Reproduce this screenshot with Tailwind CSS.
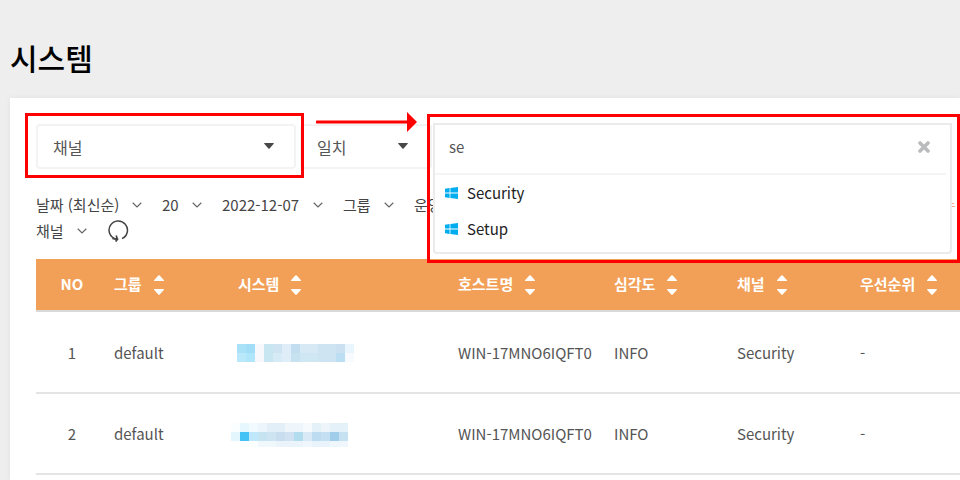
<!DOCTYPE html>
<html lang="ko">
<head>
<meta charset="utf-8">
<meta name="viewport" content="width=device-width, initial-scale=1">
<title>시스템</title>
<script src="https://cdn.jsdelivr.net/npm/@tailwindcss/browser@4"></script>
</head>
<body class="relative min-h-screen overflow-hidden bg-[#eeeeee] font-['Noto_Sans_CJK_KR',sans-serif] text-base text-[#444]">
<svg class="hidden">
  <symbol id="chev" viewBox="0 0 10 6"><path d="M.7.8 5 5 9.3.8" fill="none" stroke="#666" stroke-width="1.2"/></symbol>
  <symbol id="caret" viewBox="0 0 10 6"><path d="M.6 0h8.8q.8 0 .3.7L5.6 5.5q-.6.6-1.2 0L.3.7Q-.2 0 .6 0Z" fill="#484848"/></symbol>
  <symbol id="sort" viewBox="0 0 10 20"><path d="M0 5.2 4.3.6q.7-.7 1.4 0L10 5.2q.2.8-.6.8H.6Q-.2 6 0 5.2ZM0 14.8l4.3 4.6q.7.7 1.4 0L10 14.8q.2-.8-.6-.8H.6q-.8 0-.6.8Z" fill="#fff"/></symbol>
  <symbol id="win" viewBox="0 0 13 12"><path d="M0 1.8 4.6 1v4.6H0ZM5.4.9 13 0v5.6H5.4ZM0 6.4h4.6V11L0 10.2ZM5.4 6.4H13V12l-7.6-.9Z" fill="#00adef"/></symbol>
</svg>

<header class="flex h-[98px] items-center px-2.5 pt-[15px]">
  <h1 class="text-[30px] leading-[44px] font-medium text-black">시스템</h1>
</header>

<main class="ml-2.5 min-h-[382px] bg-white pt-[26px] pl-[26px] shadow-[0_0_5px_rgba(0,0,0,0.06)]">
  <div class="flex gap-1">
    <div class="relative w-[260px]">
      <select aria-label="검색 필드" class="h-[45px] w-full appearance-none rounded border-2 border-[#f3f3f3] bg-white px-[15px] text-base text-[#555]"><option>채널</option></select>
      <svg class="pointer-events-none absolute top-[19px] right-[22px] h-1.5 w-2.5"><use href="#caret"/></svg>
    </div>
    <div class="relative w-[132px]">
      <select aria-label="검색 조건" class="h-[45px] w-full appearance-none rounded border-2 border-[#f3f3f3] bg-white px-[15px] text-base text-[#555]"><option>일치</option></select>
      <svg class="pointer-events-none absolute top-[19px] right-6 h-1.5 w-2.5"><use href="#caret"/></svg>
    </div>
  </div>

  <div class="mt-[23px] flex items-center gap-5 text-[15px] leading-[26px]">
    <div class="flex items-center gap-[13px]"><select aria-label="정렬" class="appearance-none"><option>날짜 (최신순)</option></select><svg class="h-1.5 w-2.5"><use href="#chev"/></svg></div>
    <div class="flex items-center gap-[13px]"><select aria-label="표시 개수" class="appearance-none"><option>20</option></select><svg class="h-1.5 w-2.5"><use href="#chev"/></svg></div>
    <div class="flex items-center gap-[13px]"><select aria-label="날짜" class="appearance-none"><option>2022-12-07</option></select><svg class="h-1.5 w-2.5"><use href="#chev"/></svg></div>
    <div class="flex items-center gap-[13px]"><select aria-label="그룹" class="appearance-none"><option>그룹</option></select><svg class="h-1.5 w-2.5"><use href="#chev"/></svg></div>
    <div class="flex items-center gap-[13px]"><select aria-label="운영체제" class="appearance-none"><option>운영</option></select><svg class="h-1.5 w-2.5"><use href="#chev"/></svg></div>
    <svg class="mr-[5px] ml-auto h-1 w-[3px]" viewBox="0 0 3 4"><path d="M0 0h2v1H0zM0 3h3v1H0z" fill="#f7a590"/></svg>
  </div>
  <div class="flex items-center gap-5 text-[15px] leading-[26px]">
    <div class="flex items-center gap-[13px]"><select aria-label="채널" class="appearance-none"><option>채널</option></select><svg class="h-1.5 w-2.5"><use href="#chev"/></svg></div>
    <button aria-label="새로고침"><svg class="block size-[22px]" viewBox="0 0 22 22" fill="none" stroke="#444" stroke-width="1.5"><path d="M15 18.6A9.2 9.2 0 1 0 8.6 19"/><path d="M5.4 18.4 10.4 19.4 8.6 21.6M10.4 19.4 9.2 15.6" stroke-width="1.7"/></svg></button>
  </div>

  <table class="mt-[15px] w-full table-fixed border-collapse text-left">
    <colgroup><col class="w-[72px]"><col class="w-[124px]"><col class="w-[220px]"><col class="w-[156px]"><col class="w-[123px]"><col class="w-[123px]"><col></colgroup>
    <thead class="bg-[#f2a057] text-[15px] text-white">
      <tr class="h-[52px] border-b-2 border-[#d9d9d9]">
        <th class="text-center font-bold">NO</th>
        <th class="pl-1.5"><button class="flex items-center gap-3">그룹<svg class="h-5 w-2.5"><use href="#sort"/></svg></button></th>
        <th class="pl-1.5"><button class="flex items-center gap-3">시스템<svg class="h-5 w-2.5"><use href="#sort"/></svg></button></th>
        <th class="pl-1.5"><button class="flex items-center gap-3">호스트명<svg class="h-5 w-2.5"><use href="#sort"/></svg></button></th>
        <th class="pl-1.5"><button class="flex items-center gap-3">심각도<svg class="h-5 w-2.5"><use href="#sort"/></svg></button></th>
        <th class="pl-1.5"><button class="flex items-center gap-3">채널<svg class="h-5 w-2.5"><use href="#sort"/></svg></button></th>
        <th class="pl-1.5"><button class="flex items-center gap-3 whitespace-nowrap">우선순위<svg class="h-5 w-2.5"><use href="#sort"/></svg></button></th>
      </tr>
    </thead>
    <tbody class="text-[15px] text-[#555]">
      <tr class="h-[82px] border-b-2 border-[#e4e4e4] *:pt-0.5">
        <td class="text-center">1</td>
        <td class="pl-1.5">default</td>
        <td class="pl-[5px]"><svg class="h-[18px] w-[117px]" viewBox="0 0 13 2" shape-rendering="crispEdges">
          <path fill="#a9e1f9" d="M0 0h1v1H0z"/><path fill="#a2ddf7" d="M1 0h1v1H1z"/><path fill="#b8e8fa" d="M0 1h1v1H0z"/><path fill="#b0e6fb" d="M1 1h1v1H1z"/>
          <path fill="#f6f8fc" d="M2 0h1v2H2z"/><path fill="#c8e5f2" d="M3 0h1v2H3z"/><path fill="#cee4f3" d="M4 0h1v1H4z"/><path fill="#d7ebf7" d="M4 1h1v1H4z"/>
          <path fill="#deedf7" d="M5 0h1v2H5z"/><path fill="#c1ddef" d="M6 0h1v1H6z"/><path fill="#c6e2f0" d="M6 1h1v1H6z"/><path fill="#d6e9f5" d="M7 0h2v1H7z"/>
          <path fill="#cfe7f3" d="M7 1h2v1H7z"/><path fill="#cfe4f2" d="M9 0h2v2H9z"/><path fill="#cbe1f2" d="M11 0h1v1h-1z"/>
          <path fill="#bbdef2" d="M11 1h1v1h-1z"/><path fill="#eaf6fd" d="M12 0h1v1h-1z"/><path fill="#f7fbff" d="M12 1h1v1h-1z"/></svg></td>
        <td class="pl-1.5">WIN-17MNO6IQFT0</td><td class="pl-1.5">INFO</td><td class="pl-1.5">Security</td><td class="pl-1.5">-</td>
      </tr>
      <tr class="h-[81px] border-b-2 border-[#e4e4e4] *:pt-0.5">
        <td class="text-center">2</td>
        <td class="pl-1.5">default</td>
        <td><svg class="-ml-px h-6 w-[117px]" viewBox="0 0 117 24" shape-rendering="crispEdges">
          <path fill="#fafeff" d="M0 0h9v9H0z"/><path fill="#e7f7fe" d="M9 0h9v9H9z"/><path fill="#f1faff" d="M18 0h9v9h-9z"/><path fill="#ecf5fb" d="M27 0h9v9h-9z"/><path fill="#e2eff8" d="M36 0h18v9H36z"/><path fill="#eff6fb" d="M54 0h18v9H54z"/><path fill="#f6fafd" d="M72 0h9v9h-9z"/><path fill="#e4f1f9" d="M81 0h9v9h-9z"/><path fill="#edf5fb" d="M90 0h9v9h-9z"/><path fill="#e4f1f8" d="M99 0h18v9H99z"/>
          <path fill="#e3f6fe" d="M0 9h9v9H0z"/><path fill="#44c2f6" d="M9 9h9v9H9z"/><path fill="#bfe9fb" d="M18 9h9v9h-9z"/><path fill="#c5e3f1" d="M27 9h9v9h-9z"/><path fill="#cfe4f3" d="M36 9h9v9h-9z"/><path fill="#c8deef" d="M45 9h9v9h-9z"/><path fill="#d0e2f1" d="M54 9h9v9h-9z"/><path fill="#b1ddef" d="M63 9h9v9h-9z"/><path fill="#d9eaf6" d="M72 9h9v9h-9z"/><path fill="#bddcf1" d="M81 9h9v9h-9z"/><path fill="#c4def2" d="M90 9h9v9h-9z"/><path fill="#a0cdea" d="M99 9h9v9h-9z"/><path fill="#c5e1f2" d="M108 9h9v9h-9z"/>
          <path fill="#fafeff" d="M9 18h18v6H9z"/><path fill="#f1f8fc" d="M27 18h18v6H27z"/><path fill="#eaf4fa" d="M45 18h27v6H45z"/><path fill="#f0f7fc" d="M72 18h9v6h-9z"/><path fill="#e8f3fb" d="M81 18h18v6H81z"/><path fill="#eff6fc" d="M99 18h18v6H99z"/></svg></td>
        <td class="pl-1.5">WIN-17MNO6IQFT0</td><td class="pl-1.5">INFO</td><td class="pl-1.5">Security</td><td class="pl-1.5">-</td>
      </tr>
    </tbody>
  </table>
</main>

<!-- Search box with suggestions, opened over the filter rows -->
<div class="absolute top-[123px] right-2 left-[433px] h-[131px] rounded-b border-2 border-[#ebebeb] bg-white">
  <div class="mr-1 flex h-[50px] items-center border-b-2 border-[#f4f4f4] pr-4 pb-1 pl-[14px]">
    <input type="text" aria-label="검색어" value="se" class="min-w-0 flex-1 text-[15px] leading-6 text-[#555] outline-none">
    <button aria-label="지우기"><svg class="block size-3" viewBox="0 0 12 12"><path d="m2 2 8 8M10 2l-8 8" stroke="#b9bbbd" stroke-width="3.6" stroke-linecap="round"/></svg></button>
  </div>
  <ul class="text-[15px] leading-9 text-[#222]">
    <li><button class="flex w-full items-center gap-[9px] pl-2.5"><svg class="h-3 w-[13px]"><use href="#win"/></svg>Security</button></li>
    <li><button class="flex w-full items-center gap-[9px] pl-2.5"><svg class="h-3 w-[13px]"><use href="#win"/></svg>Setup</button></li>
  </ul>
</div>

<!-- Callouts -->
<div class="pointer-events-none absolute top-[113px] left-[25px] h-[65px] w-[279px] border-3 border-[#ff0000]"></div>
<svg class="pointer-events-none absolute top-28 left-[316px] h-5 w-[101px]" viewBox="0 0 101 20"><path d="M1 10h92" stroke="#f00" stroke-width="3" stroke-linecap="round"/><path d="m91 0 10 10-10 10z" fill="#f00"/></svg>
<div class="pointer-events-none absolute top-[114px] right-0 left-[427px] h-[149px] border-3 border-[#ff0000]"></div>
</body>
</html>
